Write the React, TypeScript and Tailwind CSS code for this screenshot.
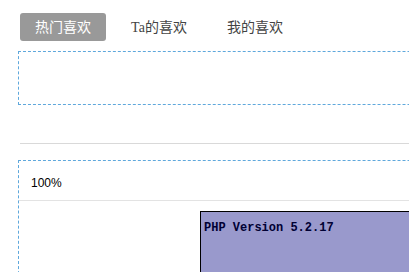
export default function App() {
  const tabs = ["热门喜欢", "Ta的喜欢", "我的喜欢"];
  return (
    <div className="w-[409px] h-[272px] overflow-hidden bg-white font-['Liberation_Serif','Noto_Sans_CJK_SC',serif]">
      <div className="w-[800px] pl-[18px]">
        {/* tabs */}
        <div className="flex gap-[10px] pl-[2px] pt-[13px]">
          {tabs.map((t, i) => (
            <div
              key={t}
              className={
                i === 0
                  ? "w-[86px] h-[28px] flex items-center justify-center rounded-[3px] bg-[#999999] text-white text-[14px]"
                  : "w-[86px] h-[28px] flex items-center justify-center text-[#444] text-[14px]"
              }
            >
              {t}
            </div>
          ))}
        </div>

        {/* empty list box */}
        <div className="mt-[10px] h-[54px] border border-dashed border-[#5fa8dc]"></div>

        <div className="mt-[38px] ml-[2px] h-[1px] bg-[#d9d9d9]"></div>

        {/* second box */}
        <div className="mt-[16px] h-[200px] border border-dashed border-[#5fa8dc]">
          <div className="h-[40px] flex items-center pl-[12px] pt-[4px] border-b border-[#e3e3e3] text-[12px] text-black font-['Liberation_Sans',sans-serif]">
            100%
          </div>
          <div className="pl-[181px] pt-[10px]">
            <div className="h-[120px] border border-black bg-[#9999cc] px-[3px] pt-[2px]">
              <span className="font-['Liberation_Mono',monospace] font-bold text-[12px] text-[#000033]">
                PHP Version 5.2.17
              </span>
            </div>
          </div>
        </div>
      </div>
    </div>
  );
}
